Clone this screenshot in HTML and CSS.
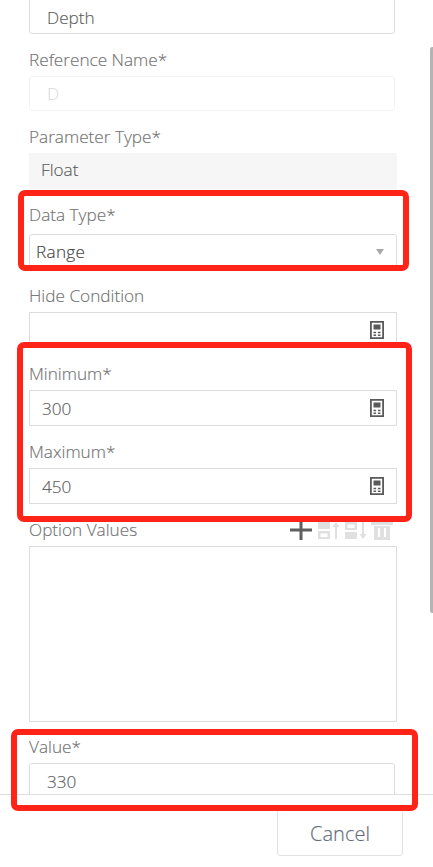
FILE: index.html
```html
<!DOCTYPE html>
<html lang="en">
<head>
<meta charset="utf-8">
<title>Parameter</title>
<link rel="stylesheet" href="styles.css">
</head>
<body>
<svg class="defs" width="0" height="0" aria-hidden="true">
  <symbol id="calc" viewBox="0 0 14 18">
    <path fill="#5a5a5a" fill-rule="evenodd" d="M0 0h14v18H0zM1.800 1.800v14.400h10.400V1.800z"/>
    <path fill="#5a5a5a" d="M3.500 3.500h7v5h-7zM3.500 10.800h2.600v1.500H3.500zM7.900 10.800h2.600v1.500H7.900zM3.500 13.500h2.600V15H3.500zM7.900 13.500h2.600V15H7.900z"/>
  </symbol>
</svg>
<main class="panel">
  <div class="scroll">
    <div class="form">
      <div class="box box-round box-first"><span class="val val-indent">Depth</span></div>

      <label class="lbl lbl-gap">Reference Name*</label>
      <div class="box box-round box-disabled"><span class="val val-indent val-muted">D</span></div>

      <label class="lbl lbl-gap">Parameter Type*</label>
      <div class="box box-wide box-readonly"><span class="val">Float</span></div>

      <label class="lbl lbl-gap lbl-tall">Data Type*</label>
      <div class="box box-wide box-select">
        <span class="val val-select">Range</span>
        <span class="caret"></span>
      </div>

      <label class="lbl lbl-gap">Hide Condition</label>
      <div class="box box-wide box-square">
        <svg class="calc"><use href="#calc"/></svg>
      </div>

      <label class="lbl lbl-gap">Minimum*</label>
      <div class="box box-wide box-square">
        <span class="val">300</span>
        <svg class="calc"><use href="#calc"/></svg>
      </div>

      <label class="lbl lbl-gap">Maximum*</label>
      <div class="box box-wide box-square">
        <span class="val">450</span>
        <svg class="calc"><use href="#calc"/></svg>
      </div>

      <div class="lbl-row">
        <label class="lbl">Option Values</label>
        <div class="tools">
          <svg class="tool" width="22" height="20" viewBox="0 0 22 20"><path fill="#5f5f5f" d="M0 8.500h22v3H0zM9.500 0h3v20h-3z"/></svg>
          <svg class="tool" width="22" height="20" viewBox="0 0 22 20"><path fill="#e0e0e0" fill-rule="evenodd" d="M1 2h12v7H1zM1 11h12v8H1zM3.500 13.500V17h7v-3.500zM19 2l3.500 5H20v12h-2V7h-2.500z"/></svg>
          <svg class="tool" width="22" height="20" viewBox="0 0 22 20"><path fill="#e0e0e0" fill-rule="evenodd" d="M1 2h12v8H1zM3.500 4.500V8h7V4.500zM1 12h12v7H1zM18 2h2v12h2.500L19 19l-3.500-5H18z"/></svg>
          <svg class="tool" width="22" height="20" viewBox="0 0 22 20"><path fill="#e0e0e0" fill-rule="evenodd" d="M0 1h22v4H0zM3 6h16v14H3zM7 8v9h2V8zM13 8v9h2V8z"/></svg>
        </div>
      </div>
      <div class="box box-wide box-area"></div>

      <label class="lbl lbl-gap lbl-value">Value*</label>
      <div class="box box-round"><span class="val val-indent">330</span></div>
    </div>
    <div class="scrollbar"></div>
  </div>
  <footer class="foot">
    <button class="cancel" type="button">Cancel</button>
  </footer>
</main>
<div class="mark mark-type"></div>
<div class="mark mark-range"></div>
<div class="mark mark-value"></div>
</body>
</html>
```
FILE: styles.css
```css
* { box-sizing: border-box; }
html, body {
  margin: 0;
  height: 867px;
  overflow: hidden;
  background: #fff;
}
body {
  position: relative;
  font-family: "Open Sans", "Noto Sans", sans-serif;
  font-size: 17.2px;
  color: #555;
}
.defs { position: absolute; }
.panel { display: flex; flex-direction: column; height: 867px; }
.scroll {
  position: relative;
  height: 794px;
  overflow: hidden;
  flex: none;
}
.form {
  display: flex;
  flex-direction: column;
  align-items: flex-start;
  padding-left: 29px;
  margin-top: -3px;
}
.lbl {
  display: block;
  height: 22px;
  line-height: 22px;
  color: #727272;
  font-weight: 300;
  margin-bottom: 5px;
  -webkit-text-stroke: 0.15px #727272;
}
.lbl-gap { margin-top: 15px; }
.lbl-tall { margin-bottom: 8px; }
.lbl-value { margin-top: 14px; }
.box {
  display: flex;
  align-items: center;
  width: 366px;
  height: 36px;
  border: 1px solid #dcdcdc;
  flex: none;
}
.box-first { height: 37px; padding-top: 4px; }
.box-round { border-radius: 3px; }
.box-wide { width: 368px; padding-right: 12px; }
.box-disabled { height: 35px; border-color: #f2f2f2; }
.box-readonly { border: 0; background: #f6f6f6; padding-bottom: 3px; }
.box-select { border-radius: 3px; padding-bottom: 2px; }
.val {
  padding-left: 12px;
  color: #5c5c5c;
  font-weight: 300;
  -webkit-text-stroke: 0.15px #5c5c5c;
}
.val-indent { padding-left: 17px; }
.val-muted { color: #d8d8d8; -webkit-text-stroke: 0; }
.val-select { padding-left: 6px; color: #444; -webkit-text-stroke: 0.15px #444; letter-spacing: 0.3px; }
.caret {
  margin-left: auto;
  margin-right: 0;
  margin-top: 2px;
  width: 0;
  height: 0;
  border-left: 4px solid transparent;
  border-right: 4px solid transparent;
  border-top: 6px solid #a8a8a8;
}
.calc { width: 14px; height: 18px; margin-left: auto; }
.lbl-row {
  display: flex;
  align-items: center;
  justify-content: space-between;
  width: 364px;
  margin-top: 15px;
  margin-bottom: 5px;
  height: 22px;
}
.lbl-row .lbl { margin: 0; }
.tools { display: flex; gap: 5px; align-items: center; }
.tool { flex: none; }
.box-area { height: 176px; }
.scrollbar {
  position: absolute;
  top: 47px;
  right: 0;
  width: 3px;
  height: 566px;
  background: #b4b4b4;
  border-radius: 2px 0 0 2px;
}
.foot {
  flex: 1;
  border-top: 1px solid #dedede;
  display: flex;
  justify-content: flex-end;
  align-items: flex-start;
  padding: 14px 30px 0 0;
}
.cancel {
  width: 126px;
  height: 47px;
  background: #fff;
  border: 1px solid #e2e2e2;
  border-radius: 3px;
  font: 300 20px "Open Sans", "Noto Sans", sans-serif;
  color: #5f6b78;
  -webkit-text-stroke: 0.15px #5f6b78;
  padding: 2px 0 0;
}
.mark {
  position: absolute;
  border: 6px solid #ff2318;
  border-radius: 7px;
  pointer-events: none;
}
.mark-type { left: 18px; top: 190px; width: 391px; height: 81px; }
.mark-range { left: 17px; top: 342px; width: 395px; height: 180px; }
.mark-value { left: 11px; top: 729px; width: 407px; height: 82px; }
```
